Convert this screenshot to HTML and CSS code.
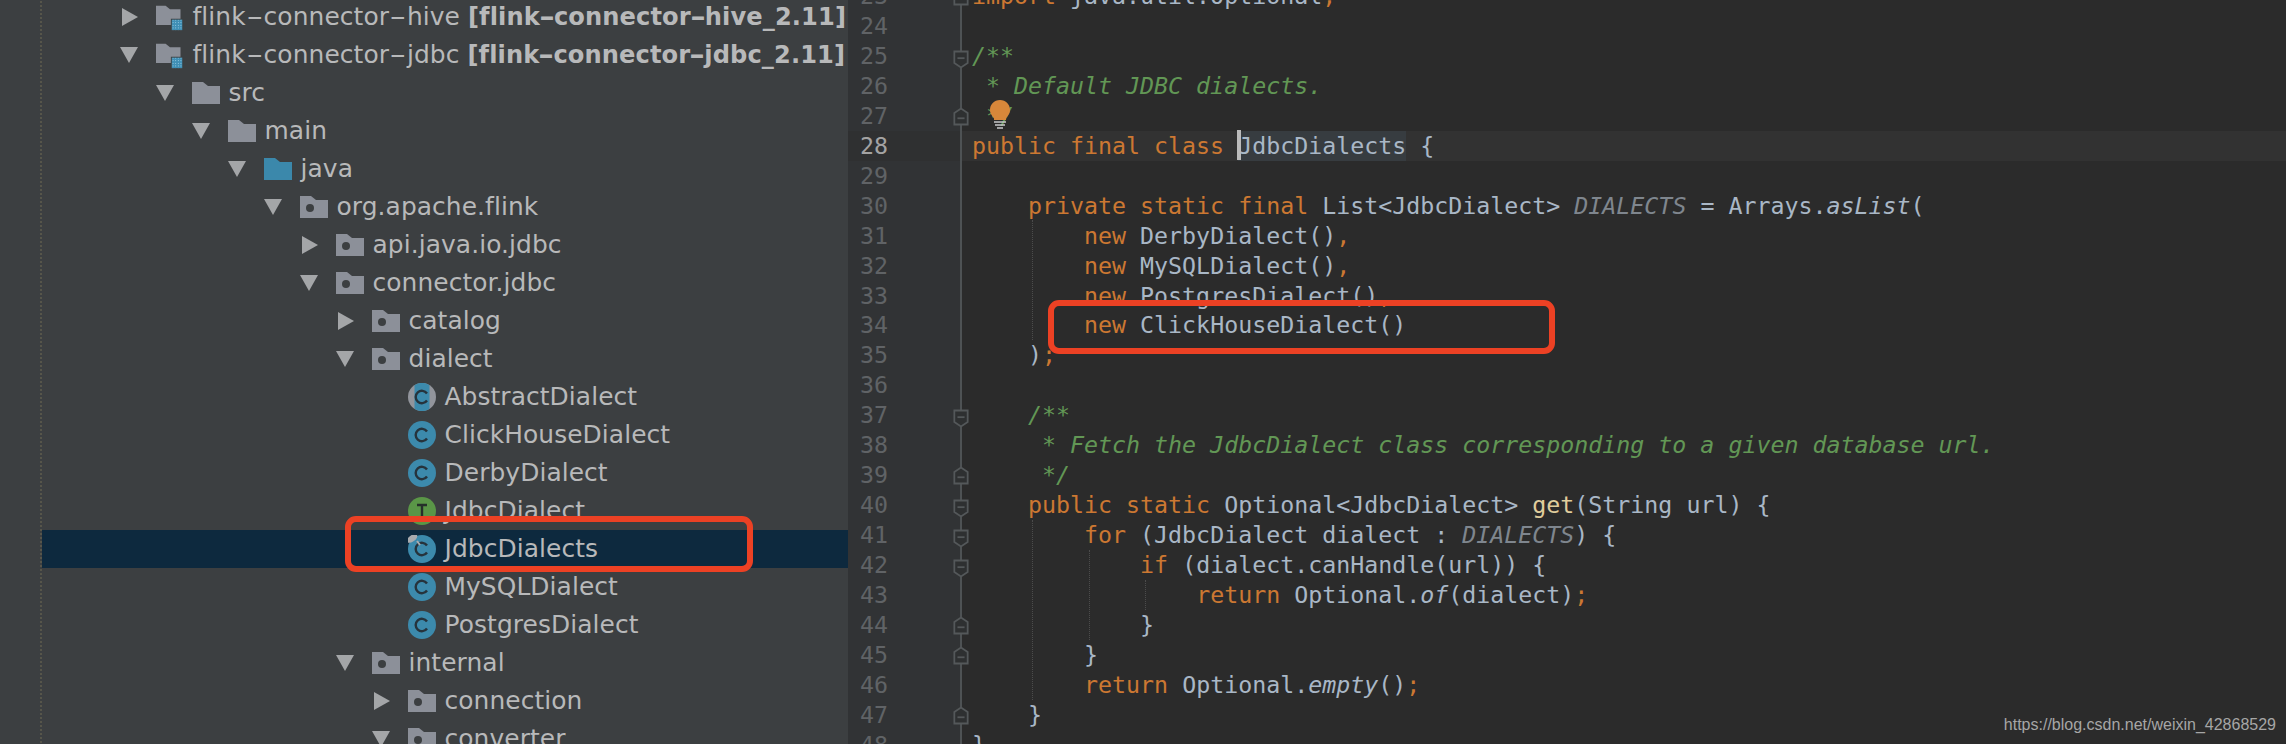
FILE: index.html
```html
<!DOCTYPE html>
<html lang="en">
<head>
<meta charset="utf-8">
<title>JdbcDialects</title>
<link rel="stylesheet" href="styles.css">
</head>
<body>
<svg class="defs" aria-hidden="true">
  <defs>
    <pattern id="dots" width="3" height="3" patternUnits="userSpaceOnUse"><rect width="3" height="3" fill="#3f8fb5"/><rect x="1" y="1" width="1" height="1" fill="#a9d6ea"/></pattern>
    <symbol id="tri-r" viewBox="0 0 18 18"><polygon points="2,0 18,9 2,18" fill="#a4a6a8"/></symbol>
    <symbol id="tri-d" viewBox="0 0 18 18"><polygon points="0,1 18,1 9,17" fill="#a4a6a8"/></symbol>
    <symbol id="folder" viewBox="0 0 28 28"><path d="M0 3H11L16 7H28V25H0Z" fill="#8c9099"/></symbol>
    <symbol id="folder-src" viewBox="0 0 28 28"><path d="M0 3H11L16 7H28V25H0Z" fill="#3b88ab"/></symbol>
    <symbol id="folder-pkg" viewBox="0 0 28 28"><path d="M0 3H11L16 7H28V25H0Z" fill="#8c9099"/><circle cx="10" cy="15" r="4" fill="#3c3f41"/></symbol>
    <symbol id="folder-mod" viewBox="0 0 32 32"><path d="M0 3H11L16 7H28V25H0Z" fill="#8c9099"/><rect x="17" y="18" width="14" height="14" fill="#3c3f41"/><rect x="18" y="19" width="12" height="12" fill="url(#dots)"/></symbol>
    <symbol id="cls" viewBox="0 0 28 28"><circle cx="14" cy="14" r="14" fill="#3c8aac"/><path d="M19 10.5A6.2 6.2 0 1 0 19 17.5" fill="none" stroke="#26333c" stroke-width="2.4"/></symbol>
    <symbol id="abs" viewBox="0 0 28 28"><circle cx="14" cy="14" r="14" fill="#92959c"/><path d="M6.500 2.200A14 14 0 0 1 21.500 2.200V25.800A14 14 0 0 1 6.500 25.800Z" fill="#3c8aac"/><path d="M19 10.5A6.2 6.2 0 1 0 19 17.5" fill="none" stroke="#26333c" stroke-width="2.4"/></symbol>
    <symbol id="ifc" viewBox="0 0 28 28"><circle cx="14" cy="14" r="14" fill="#5a9647"/><path d="M9 8H19M14 8V21" fill="none" stroke="#26302a" stroke-width="2.4"/></symbol>
    <symbol id="cls-pin" viewBox="0 0 28 28"><circle cx="14" cy="14" r="14" fill="#3c8aac"/><path d="M19 10.5A6.2 6.2 0 1 0 19 17.5" fill="none" stroke="#26333c" stroke-width="2.4"/><path d="M9 6L12 10" stroke="#a9abae" stroke-width="2"/><ellipse cx="4" cy="3.5" rx="6" ry="3.2" transform="rotate(-35 4 3.5)" fill="#a9abae"/></symbol>
    <symbol id="fold-open" viewBox="0 0 18 20"><path d="M1.5 1H16.5V14L9 19L1.500 14Z" fill="#2e3031" stroke="#54585a" stroke-width="2"/><path d="M5 8.500H13" stroke="#54585a" stroke-width="2"/></symbol>
    <symbol id="fold-close" viewBox="0 0 18 20"><path d="M1.500 19H16.500V6L9 1L1.500 6Z" fill="#2e3031" stroke="#54585a" stroke-width="2"/><path d="M5 12H13" stroke="#54585a" stroke-width="2"/></symbol>
  </defs>
</svg>

<div class="app">
  <aside class="tree">
    <ul class="rows">
      <li class="row d0"><svg class="tri"><use href="#tri-r"/></svg><svg class="icon"><use href="#folder-mod"/></svg><span>flink<span class="hy">-</span>connector<span class="hy">-</span>hive <b>[flink<span class="hy">-</span>connector<span class="hy">-</span>hive_2.11]</b></span></li>
      <li class="row d0"><svg class="tri"><use href="#tri-d"/></svg><svg class="icon"><use href="#folder-mod"/></svg><span>flink<span class="hy">-</span>connector<span class="hy">-</span>jdbc <b>[flink<span class="hy">-</span>connector<span class="hy">-</span>jdbc_2.11]</b></span></li>
      <li class="row d1"><svg class="tri"><use href="#tri-d"/></svg><svg class="icon"><use href="#folder"/></svg><span>src</span></li>
      <li class="row d2"><svg class="tri"><use href="#tri-d"/></svg><svg class="icon"><use href="#folder"/></svg><span>main</span></li>
      <li class="row d3"><svg class="tri"><use href="#tri-d"/></svg><svg class="icon"><use href="#folder-src"/></svg><span>java</span></li>
      <li class="row d4"><svg class="tri"><use href="#tri-d"/></svg><svg class="icon"><use href="#folder-pkg"/></svg><span>org.apache.flink</span></li>
      <li class="row d5"><svg class="tri"><use href="#tri-r"/></svg><svg class="icon"><use href="#folder-pkg"/></svg><span>api.java.io.jdbc</span></li>
      <li class="row d5"><svg class="tri"><use href="#tri-d"/></svg><svg class="icon"><use href="#folder-pkg"/></svg><span>connector.jdbc</span></li>
      <li class="row d6"><svg class="tri"><use href="#tri-r"/></svg><svg class="icon"><use href="#folder-pkg"/></svg><span>catalog</span></li>
      <li class="row d6"><svg class="tri"><use href="#tri-d"/></svg><svg class="icon"><use href="#folder-pkg"/></svg><span>dialect</span></li>
      <li class="row d7"><i class="tri"></i><svg class="icon"><use href="#abs"/></svg><span>AbstractDialect</span></li>
      <li class="row d7"><i class="tri"></i><svg class="icon"><use href="#cls"/></svg><span>ClickHouseDialect</span></li>
      <li class="row d7"><i class="tri"></i><svg class="icon"><use href="#cls"/></svg><span>DerbyDialect</span></li>
      <li class="row d7"><i class="tri"></i><svg class="icon"><use href="#ifc"/></svg><span>JdbcDialect</span></li>
      <li class="row d7 selected"><i class="tri"></i><svg class="icon"><use href="#cls-pin"/></svg><span>JdbcDialects</span></li>
      <li class="row d7"><i class="tri"></i><svg class="icon"><use href="#cls"/></svg><span>MySQLDialect</span></li>
      <li class="row d7"><i class="tri"></i><svg class="icon"><use href="#cls"/></svg><span>PostgresDialect</span></li>
      <li class="row d6"><svg class="tri"><use href="#tri-d"/></svg><svg class="icon"><use href="#folder-pkg"/></svg><span>internal</span></li>
      <li class="row d7"><svg class="tri"><use href="#tri-r"/></svg><svg class="icon"><use href="#folder-pkg"/></svg><span>connection</span></li>
      <li class="row d7"><svg class="tri"><use href="#tri-d"/></svg><svg class="icon"><use href="#folder-pkg"/></svg><span>converter</span></li>
    </ul>
  </aside>

  <main class="editor">
    <div class="gutter">
      <div class="num">23<svg class="fold close"><use href="#fold-close"/></svg></div>
      <div class="num">24</div>
      <div class="num">25<svg class="fold open"><use href="#fold-open"/></svg></div>
      <div class="num">26</div>
      <div class="num">27<svg class="fold close"><use href="#fold-close"/></svg></div>
      <div class="num current">28</div>
      <div class="num">29</div>
      <div class="num">30</div>
      <div class="num">31</div>
      <div class="num">32</div>
      <div class="num">33</div>
      <div class="num">34</div>
      <div class="num">35</div>
      <div class="num">36</div>
      <div class="num">37<svg class="fold open"><use href="#fold-open"/></svg></div>
      <div class="num">38</div>
      <div class="num">39<svg class="fold close"><use href="#fold-close"/></svg></div>
      <div class="num">40<svg class="fold open"><use href="#fold-open"/></svg></div>
      <div class="num">41<svg class="fold open"><use href="#fold-open"/></svg></div>
      <div class="num">42<svg class="fold open"><use href="#fold-open"/></svg></div>
      <div class="num">43</div>
      <div class="num">44<svg class="fold close"><use href="#fold-close"/></svg></div>
      <div class="num">45<svg class="fold close"><use href="#fold-close"/></svg></div>
      <div class="num">46</div>
      <div class="num">47<svg class="fold close"><use href="#fold-close"/></svg></div>
      <div class="num">48</div>
    </div>
    <pre class="code"><code><span class="line"><span class="k">import</span> java.util.Optional<span class="k">;</span></span>
<span class="line"> </span>
<span class="line"><span class="c">/**</span></span>
<span class="line"><span class="c"> * Default JDBC dialects.</span></span>
<span class="line"><span class="c"> */</span></span>
<span class="line current"><span class="k">public final class </span><span class="usage">JdbcDialects</span> {</span>
<span class="line"> </span>
<span class="line">    <span class="k">private static final </span>List&lt;JdbcDialect&gt; <span class="f">DIALECTS</span> = Arrays.<i>asList</i>(</span>
<span class="line">        <span class="k">new </span>DerbyDialect()<span class="k">,</span></span>
<span class="line">        <span class="k">new </span>MySQLDialect()<span class="k">,</span></span>
<span class="line">        <span class="k">new </span>PostgresDialect()<span class="k">,</span></span>
<span class="line">        <span class="k">new </span>ClickHouseDialect()</span>
<span class="line">    )<span class="k">;</span></span>
<span class="line"> </span>
<span class="line">    <span class="c">/**</span></span>
<span class="line"><span class="c">     * Fetch the JdbcDialect class corresponding to a given database url.</span></span>
<span class="line"><span class="c">     */</span></span>
<span class="line">    <span class="k">public static </span>Optional&lt;JdbcDialect&gt; <span class="m">get</span>(String url) {</span>
<span class="line">        <span class="k">for </span>(JdbcDialect dialect : <span class="f">DIALECTS</span>) {</span>
<span class="line">            <span class="k">if </span>(dialect.canHandle(url)) {</span>
<span class="line">                <span class="k">return </span>Optional.<i>of</i>(dialect)<span class="k">;</span></span>
<span class="line">            }</span>
<span class="line">        }</span>
<span class="line">        <span class="k">return </span>Optional.<i>empty</i>()<span class="k">;</span></span>
<span class="line">    }</span>
<span class="line">}</span></code></pre>
    <i class="guide g1"></i>
    <i class="guide g2"></i>
    <i class="guide g3"></i>
    <i class="guide g4"></i>
    <i class="caret"></i>
    <svg class="bulb" viewBox="0 0 22 30"><path d="M11 1C5 1 1 5.500 1 11C1 15 3.500 17 5 19.500V21H17V19.500C18.500 17 21 15 21 11C21 5.500 17 1 11 1Z" fill="#d8873a"/><path d="M5 23H17M6 26H16M8 29H14" stroke="#c8c9ca" stroke-width="1.500"/></svg>
  </main>

  <div class="mark mark-tree"></div>
  <div class="mark mark-code"></div>
  <div class="watermark">https://blog.csdn.net/weixin_42868529</div>
</div>
</body>
</html>
```
FILE: styles.css
```css
* { box-sizing: border-box; }
html, body { margin: 0; padding: 0; background: #2b2b2b; }
body { width: 2286px; height: 744px; overflow: hidden; }
.defs { position: absolute; width: 0; height: 0; }

.app { position: relative; display: flex; width: 2286px; height: 744px; overflow: hidden; }

/* project tree */
.tree { flex: 0 0 848px; height: 744px; background: #3c3f41; padding-left: 40px; overflow: hidden; }
.rows {
  list-style: none; margin: -2px 0 0; padding: 0; height: 760px;
  border-left: 2px dotted #56554a;
  font: 24.9px/38px "DejaVu Sans", sans-serif; letter-spacing: 0.08px; color: #b8b9ba; white-space: nowrap;
}
.row { display: flex; align-items: center; height: 38px; }
.row b { font-weight: 700; font-size: 0.97em; letter-spacing: 0.1px; }
.hy { display: inline-block; width: 0.72em; text-align: center; transform: scaleX(1.9); }
.row b .hy { width: 0.58em; transform: scaleX(1.6); }
.selected { background: #0d293e; }
.d0 { padding-left: 78px; }
.d1 { padding-left: 114px; }
.d2 { padding-left: 150px; }
.d3 { padding-left: 186px; }
.d4 { padding-left: 222px; }
.d5 { padding-left: 258px; }
.d6 { padding-left: 294px; }
.d7 { padding-left: 330px; }
.tri { flex: 0 0 18px; width: 18px; height: 18px; margin-right: 18px; display: block; }
.icon { flex: 0 0 28px; width: 28px; height: 28px; margin-right: 8.500px; overflow: visible; }
.icon use { overflow: visible; }

/* editor */
.editor { position: relative; flex: 1; display: flex; align-items: flex-start; background: #2b2b2b; height: 744px; overflow: hidden; }
.gutter { flex: 0 0 114px; margin-top: -19px; height: 800px; background: #313335; border-right: 2px solid #4e5254; }
.num {
  position: relative; height: 29.96px; padding-left: 12px;
  font: 23.27px/29.96px "DejaVu Sans Mono", monospace; color: #606366;
}
.num.current { color: #a4a3a3; background: #2f3031; }
.fold { position: absolute; right: -9px; width: 16px; height: 19px; }
.fold.open { top: 9px; }
.fold.close { top: 6px; }

.code {
  margin: -19px 0 0; padding: 0; flex: 1;
  font: 23.27px/29.96px "DejaVu Sans Mono", monospace; color: #a9b7c6; white-space: normal;
}
.code code { font: inherit; display: block; }
.line { display: block; height: 29.96px; padding-left: 10px; white-space: pre; }
.line.current { background: #323232; }
.k { color: #cc7832; }
.c { color: #629755; font-style: italic; }
.f { color: #7f868e; font-style: italic; }
.m { color: #e0cd9c; }
.usage { background: #373c40; display: inline-block; height: 30px; }

.guide { position: absolute; width: 0; border-left: 1px dotted #4c4c4c; }
.g1 { left: 184px; top: 220px; height: 120px; }
.g2 { left: 184px; top: 520px; height: 180px; }
.g3 { left: 241px; top: 550px; height: 90px; }
.g4 { left: 297px; top: 580px; height: 30px; }
.caret { position: absolute; left: 389px; top: 130px; width: 4px; height: 30px; background: #bbbbbb; }
.bulb { position: absolute; left: 141px; top: 99px; width: 22px; height: 30px; }

/* annotations */
.mark { position: absolute; border: 6px solid #ec4124; border-radius: 11px; }
.mark-tree { left: 345px; top: 516px; width: 408px; height: 56px; }
.mark-code { left: 1048px; top: 300px; width: 507px; height: 54px; }
.watermark {
  position: absolute; right: 10px; top: 715px;
  font: 16px/20px "Liberation Sans", Arial, sans-serif; color: #a6a6a6;
}
```
